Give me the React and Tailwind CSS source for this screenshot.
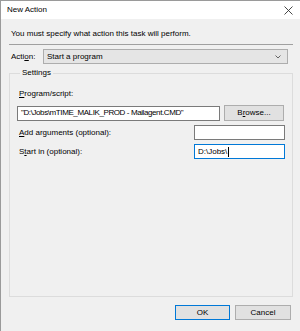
import React from 'react';

const font = "font-['Liberation_Sans','Arial',sans-serif]";

const Field = ({ children, focused }) => (
	<div className={`h-[15px] bg-white border flex items-center px-[3px] ${focused ? 'border-[#0078d7]' : 'border-[#7a7a7a]'}`}>
		{children}
	</div>
);

const App = () => {
	return (
		<div className={`w-[300px] h-[331px] bg-[#f0f0f0] border-l border-t border-[#9a9a9a] flex flex-col text-[8px] text-black leading-[12px] ${font}`}>
			{/* title bar */}
			<div className="h-[18px] bg-white flex items-center justify-between pl-[6px] pr-[4px] shrink-0">
				<span className="text-[8px]">New Action</span>
				<svg width="9" height="9" viewBox="0 0 9 9" className="mr-[3px]">
					<path d="M0.5 0.5 L8.5 8.5 M8.5 0.5 L0.5 8.5" stroke="#333" strokeWidth="0.9" fill="none" />
				</svg>
			</div>

			<div className="flex-1 flex flex-col pl-[8px] pr-[7px]">
				<p className="pl-[2px] pt-[9px]">You must specify what action this task will perform.</p>
				<div className="mt-[4px] h-px bg-[#a0a0a0]"></div>

				<div className="mt-[4px] flex items-center">
					<span className="w-[34px] pl-[2px] shrink-0">Acti<u>o</u>n:</span>
					<div className="flex-1 mr-[5px] h-[15px] bg-[#e5e5e5] border border-[#adadad] flex items-center justify-between pl-[3px] pr-[6px]">
						<span>Start a program</span>
						<svg width="6" height="4" viewBox="0 0 6 4">
							<path d="M0.5 0.5 L3 3 L5.5 0.5" stroke="#555" strokeWidth="0.9" fill="none" />
						</svg>
					</div>
				</div>

				<fieldset className="mt-[3px] flex-1 border border-[#dcdcdc] pl-[7px] pr-[8px] pt-[9px]">
					<legend className="ml-[3px] px-[2px]">Settings</legend>

					<label className="block pl-[2px]"><u>P</u>rogram/script:</label>
					<div className="mt-[5px] flex items-center gap-[4px]">
						<div className="flex-1">
							<Field>
								<span className="tracking-[-0.4px]">{'"D:\\Jobs\\mTIME_MALIK_PROD - Mailagent.CMD"'}</span>
							</Field>
						</div>
						<button className="w-[60px] h-[16px] bg-[#e1e1e1] border border-[#adadad] flex items-center justify-center">
							B<u>r</u>owse...
						</button>
					</div>

					<div className="mt-[4px] flex items-center justify-between">
						<span className="pl-[2px]"><u>A</u>dd arguments (optional):</span>
						<div className="w-[91px] -mr-[1px]">
							<Field />
						</div>
					</div>

					<div className="mt-[4px] flex items-center justify-between">
						<span className="pl-[2px]">S<u>t</u>art in (optional):</span>
						<div className="w-[91px] -mr-[1px]">
							<Field focused>
								<span>{'D:\\Jobs\\'}</span>
								<span className="w-px h-[10px] bg-black ml-px"></span>
							</Field>
						</div>
					</div>
				</fieldset>

				<div className="mt-[8px] mb-[11px] flex justify-end gap-[5px] pr-[2px]">
					<button className="w-[55px] h-[15px] bg-[#e1e1e1] border border-[#0078d7] flex items-center justify-center">OK</button>
					<button className="w-[56px] h-[15px] bg-[#e1e1e1] border border-[#adadad] flex items-center justify-center">Cancel</button>
				</div>
			</div>
		</div>
	);
};

export default App;
